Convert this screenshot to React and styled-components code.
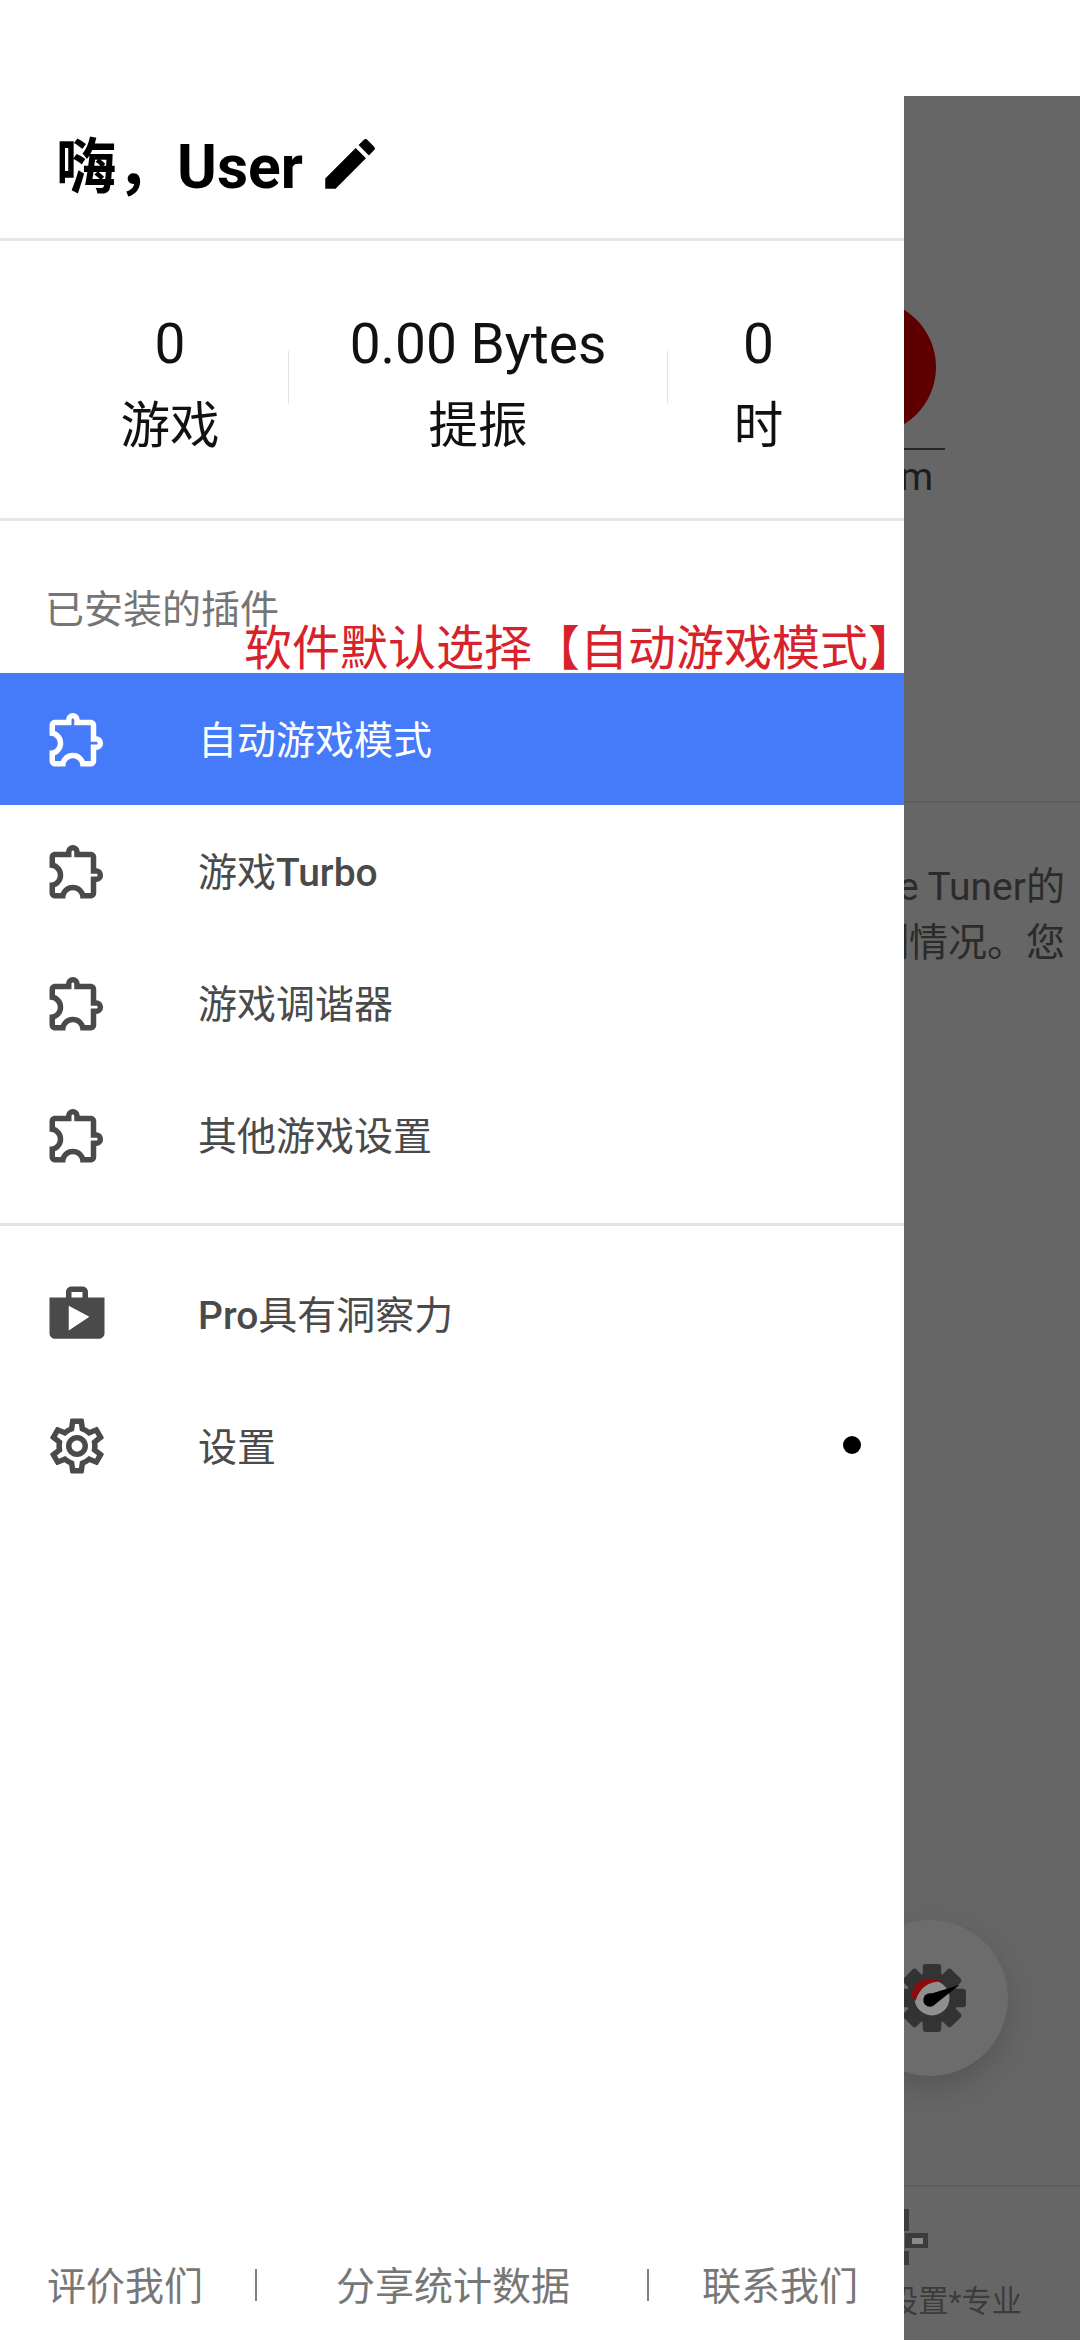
import React from "react";
import styled, { createGlobalStyle } from "styled-components";
import { MdEdit, MdOutlineExtension, MdShop, MdOutlineSettings } from "react-icons/md";

const GlobalStyle = createGlobalStyle`
  html, body {
    margin: 0;
    padding: 0;
    background: #ffffff;
  }
  body {
    width: 1080px;
    height: 2340px;
    overflow: hidden;
    font-family: Roboto, "Noto Sans CJK SC", sans-serif;
  }
`;

const Page = styled.div`
  display: flex;
  width: 1080px;
  height: 2340px;
`;

const Drawer = styled.aside`
  display: flex;
  flex-direction: column;
  flex: none;
  width: 904px;
  height: 2340px;
  background: #ffffff;
`;

const Header = styled.header`
  display: flex;
  align-items: center;
  box-sizing: border-box;
  height: 241px;
  padding: 84px 0 0 56px;
  border-bottom: 3px solid #e6e6e6;
  color: #000000;
  font-size: 60.5px;
  font-weight: 700;
  svg {
    margin: 6px 0 0 14px;
    font-size: 66px;
  }
`;

const Stats = styled.section`
  display: grid;
  grid-template-columns: 236px 1px 378px 1px 1fr;
  box-sizing: border-box;
  height: 280px;
  padding: 62px 55px 0 52px;
  border-bottom: 3px solid #e6e6e6;
`;

const Stat = styled.div`
  text-align: center;
  color: #111111;
`;

const StatValue = styled.div`
  font-size: 55px;
  line-height: 82px;
`;

const StatLabel = styled.div`
  font-size: 49.5px;
  line-height: 82px;
`;

const StatDivider = styled.div`
  height: 53px;
  margin-top: 48px;
  background: #e2e2e2;
`;

const SectionTitle = styled.div`
  position: relative;
  box-sizing: border-box;
  height: 152px;
  padding: 63px 0 0 45px;
  color: #757575;
  font-size: 39px;
  line-height: 52px;
`;

const Annotation = styled.span`
  position: absolute;
  left: 244px;
  top: 96px;
  color: #d8222b;
  font-size: 48px;
  line-height: 64px;
  white-space: nowrap;
`;

const MenuRow = styled.div`
  display: flex;
  align-items: center;
  height: 132px;
  padding-left: 44px;
  background: ${(p) => (p.$active ? "#457af9" : "transparent")};
  color: ${(p) => (p.$active ? "#ffffff" : "#4a4a4a")};
  svg {
    flex: none;
    margin-right: 88px;
    font-size: 66px;
  }
`;

const MenuText = styled.span`
  padding-top: 4px;
  font-size: 39px;
  line-height: 52px;
`;

const Latin = styled.span`
  font-weight: 500;
`;

const Rule = styled.div`
  height: 3px;
  margin: 22px 0 22px;
  background: #e2e2e2;
`;

const Dot = styled.span`
  width: 18px;
  height: 18px;
  margin: 0 43px 2px auto;
  border-radius: 50%;
  background: #000000;
`;

const Footer = styled.footer`
  display: flex;
  align-items: center;
  height: 108px;
  margin-top: auto;
  padding: 0 0 6px 47px;
  box-sizing: border-box;
  color: #777777;
  font-size: 39px;
`;

const FooterLink = styled.span`
  padding: 0 ${(p) => p.$right}px 0 ${(p) => p.$left}px;
  white-space: nowrap;
`;

const FooterSep = styled.span`
  flex: none;
  width: 2px;
  height: 32px;
  margin-top: 4px;
  background: #808080;
`;

const RightSide = styled.div`
  display: flex;
  flex-direction: column;
  flex: 1;
  min-width: 0;
`;

const StatusGap = styled.div`
  height: 96px;
  background: #ffffff;
`;

const Backdrop = styled.div`
  position: relative;
  display: flex;
  flex-direction: column;
  flex: 1;
  overflow: hidden;
  background: #666666;
`;

const ProfileArea = styled.div`
  display: flex;
  justify-content: flex-end;
  box-sizing: border-box;
  height: 707px;
  padding: 204px 135px 0 0;
  border-bottom: 2px solid #5d5d5d;
`;

const ProfileColumn = styled.div`
  display: flex;
  flex-direction: column;
  align-items: center;
  flex: none;
  width: 152px;
`;

const Avatar = styled.div`
  width: 134px;
  height: 134px;
  border-radius: 50%;
  background: #5e0000;
`;

const AvatarLine = styled.div`
  align-self: stretch;
  height: 2px;
  margin-top: 14px;
  background: #262626;
`;

const AvatarName = styled.div`
  margin: 3px 4px 0 0;
  color: #1c1c1c;
  font-size: 38px;
  line-height: 48px;
  white-space: nowrap;
`;

const Intro = styled.div`
  padding-top: 56px;
`;

const IntroLine = styled.div`
  display: flex;
  justify-content: flex-end;
  padding-right: 15px;
  color: #2b2b2b;
  font-size: 39px;
  line-height: 56px;
  white-space: nowrap;
`;

const Fab = styled.div`
  position: absolute;
  right: 72px;
  bottom: 264px;
  display: flex;
  align-items: center;
  justify-content: center;
  width: 156px;
  height: 156px;
  border-radius: 50%;
  background: #6c6c6c;
  box-shadow: 0 12px 30px rgba(0, 0, 0, 0.16);
  svg {
    margin-left: 3px;
  }
`;

const BottomNav = styled.nav`
  display: flex;
  flex-direction: column;
  align-items: flex-end;
  box-sizing: border-box;
  height: 155px;
  margin-top: auto;
  padding: 22px 58px 0 0;
  border-top: 2px solid #5d5d5d;
`;

const NavGlyph = styled.svg`
  align-self: flex-start;
  flex: none;
`;

const NavLabel = styled.div`
  margin-top: 15px;
  color: #3c3c3c;
  font-size: 30.25px;
  line-height: 40px;
  white-space: nowrap;
`;

const plugins = ["自动游戏模式", "游戏", "游戏调谐器", "其他游戏设置"];

function GaugeGear() {
  const teeth = [0, 45, 90, 135, 180, 225, 270, 315];
  return (
    <svg width="72" height="72" viewBox="0 0 70 70">
      <g fill="#333333">
        {teeth.map((a) => (
          <rect key={a} x="26" y="2" width="18" height="16" rx="3" transform={`rotate(${a} 35 35)`} />
        ))}
      </g>
      <circle cx="35" cy="35" r="21" fill="#8f8f8f" stroke="#333333" strokeWidth="8" />
      <path d="M15 33C15 20 30 11 46 19C33 18 23 24 19 38Z" fill="#8c0a0a" />
      <path d="M33 31L62 22L38 41Z" fill="#000000" />
      <circle cx="33" cy="37" r="6.5" fill="#000000" />
    </svg>
  );
}

function App() {
  return (
    <>
      <GlobalStyle />
      <Page>
        <Drawer>
          <Header>
            嗨，User
            <MdEdit />
          </Header>
          <Stats>
            <Stat>
              <StatValue>0</StatValue>
              <StatLabel>游戏</StatLabel>
            </Stat>
            <StatDivider />
            <Stat>
              <StatValue>0.00 Bytes</StatValue>
              <StatLabel>提振</StatLabel>
            </Stat>
            <StatDivider />
            <Stat>
              <StatValue>0</StatValue>
              <StatLabel>时</StatLabel>
            </Stat>
          </Stats>
          <SectionTitle>
            已安装的插件
            <Annotation>软件默认选择【自动游戏模式】</Annotation>
          </SectionTitle>
          {plugins.map((name, i) => (
            <MenuRow key={name} $active={i === 0}>
              <MdOutlineExtension />
              <MenuText>
                {name}
                {i === 1 && <Latin>Turbo</Latin>}
              </MenuText>
            </MenuRow>
          ))}
          <Rule />
          <MenuRow>
            <MdShop />
            <MenuText>
              <Latin>Pro</Latin>具有洞察力
            </MenuText>
          </MenuRow>
          <MenuRow>
            <MdOutlineSettings />
            <MenuText>设置</MenuText>
            <Dot />
          </MenuRow>
          <Footer>
            <FooterLink $left={0} $right={52}>评价我们</FooterLink>
            <FooterSep />
            <FooterLink $left={79} $right={77}>分享统计数据</FooterLink>
            <FooterSep />
            <FooterLink $left={53} $right={0}>联系我们</FooterLink>
          </Footer>
        </Drawer>
        <RightSide>
          <StatusGap />
          <Backdrop>
            <ProfileArea>
              <ProfileColumn>
                <Avatar />
                <AvatarLine />
                <AvatarName>Custom</AvatarName>
              </ProfileColumn>
            </ProfileArea>
            <Intro>
              <IntroLine>Game Tuner的</IntroLine>
              <IntroLine>测情况。您</IntroLine>
            </Intro>
            <Fab>
              <GaugeGear />
            </Fab>
            <BottomNav>
              <NavGlyph width="30" height="58" viewBox="0 0 30 58">
                <path d="M0 0H5V22H0ZM0 42H5V56H0ZM1 24H24V39H1Z" fill="#3c3c3c" />
                <path d="M8 29H19V35H8Z" fill="#8a8a8a" />
              </NavGlyph>
              <NavLabel>设置*专业</NavLabel>
            </BottomNav>
          </Backdrop>
        </RightSide>
      </Page>
    </>
  );
}

export default App;
